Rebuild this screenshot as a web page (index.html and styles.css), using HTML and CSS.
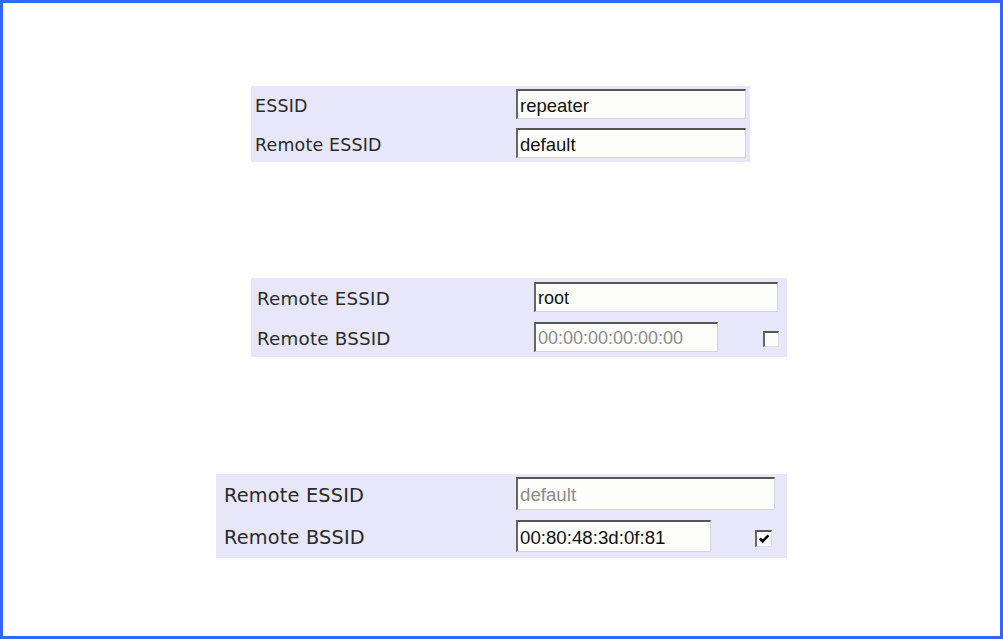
FILE: index.html
```html
<!DOCTYPE html>
<html>
<head>
<meta charset="utf-8">
<link rel="stylesheet" href="styles.css">
</head>
<body>
<div class="frame">
  <div class="panel p1">
    <div class="row r1">
      <span class="label">ESSID</span>
      <span class="field w1">repeater</span>
    </div>
    <div class="row r2">
      <span class="label">Remote ESSID</span>
      <span class="field w1">default</span>
    </div>
  </div>

  <div class="panel p2">
    <div class="row r1">
      <span class="label">Remote ESSID</span>
      <span class="field w1">root</span>
    </div>
    <div class="row r2">
      <span class="label">Remote BSSID</span>
      <span class="field w2 disabled">00:00:00:00:00:00</span>
      <span class="check"></span>
    </div>
  </div>

  <div class="panel p3">
    <div class="row r1">
      <span class="label">Remote ESSID</span>
      <span class="field w1 disabled">default</span>
    </div>
    <div class="row r2">
      <span class="label">Remote BSSID</span>
      <span class="field w2">00:80:48:3d:0f:81</span>
      <span class="check checked"><svg viewBox="0 0 12 12" width="12" height="12"><path d="M1.8 5.4 L4.6 8.4 L10.4 2.4" fill="none" stroke="#000" stroke-width="2.6"/></svg></span>
    </div>
  </div>
</div>
</body>
</html>
```

FILE: styles.css
```css
html, body {
  margin: 0;
  padding: 0;
  background: #fff;
}

.frame {
  box-sizing: border-box;
  width: 1003px;
  height: 639px;
  border: 3px solid #3366ff;
  overflow: hidden;
}

.panel {
  background: #e7e7f9;
  box-sizing: border-box;
  display: flex;
  flex-direction: column;
}

.row {
  display: flex;
  align-items: center;
}

.label {
  font-family: "DejaVu Sans", Verdana, sans-serif;
  color: #2a2a2a;
  flex: none;
  white-space: nowrap;
  padding-top: 3px;
  letter-spacing: 0.2px;
}

.field {
  box-sizing: border-box;
  flex: none;
  display: flex;
  align-items: center;
  background: #fdfdfb;
  border-top: 2px solid #555;
  border-left: 2px solid #666;
  border-right: 1px solid #d4d4d4;
  border-bottom: 1px solid #d4d4d4;
  padding-left: 2px;
  padding-top: 2px;
  font-family: "Liberation Sans", Arial, sans-serif;
  color: #111;
  white-space: nowrap;
}

.field.disabled {
  color: #8c8c8c;
}

.check {
  box-sizing: border-box;
  flex: none;
  display: flex;
  align-items: center;
  justify-content: center;
  background: #fbfbfb;
  border-top: 2px solid #555;
  border-left: 2px solid #666;
  border-right: 1px solid #ddd;
  border-bottom: 1px solid #ddd;
  margin-left: 45px;
}

/* Panel 1 */
.p1 {
  margin: 83px 0 0 248px;
  width: 499px;
  height: 76px;
  padding: 3px 4px 4px 4px;
  gap: 9px;
}
.p1 .label { width: 261px; font-size: 17.4px; }
.p1 .field { height: 30px; font-size: 18.5px; }
.p1 .w1 { width: 230px; }

/* Panel 2 */
.p2 {
  margin: 116px 0 0 248px;
  width: 536px;
  height: 79px;
  padding: 4px 6px 5px 6px;
  gap: 10px;
}
.p2 .label { width: 277px; font-size: 18.3px; }
.p2 .field { height: 30px; font-size: 18px; }
.p2 .w1 { width: 244px; }
.p2 .w2 { width: 184px; }
.p2 .check { width: 16px; height: 16px; margin-top: 4px; }

/* Panel 3 */
.p3 {
  margin: 117px 0 0 213px;
  width: 571px;
  height: 84px;
  padding: 3px 8px 6px 8px;
  gap: 10px;
}
.p3 .label { width: 292px; font-size: 19.3px; }
.p3 .field { height: 33px; font-size: 18.7px; }
.p3 .r2 .field { height: 32px; }
.p3 .w1 { width: 259px; }
.p3 .w2 { width: 195px; }
.p3 .check { width: 17px; height: 17px; margin-top: 4px; margin-left: 44px; }
```
